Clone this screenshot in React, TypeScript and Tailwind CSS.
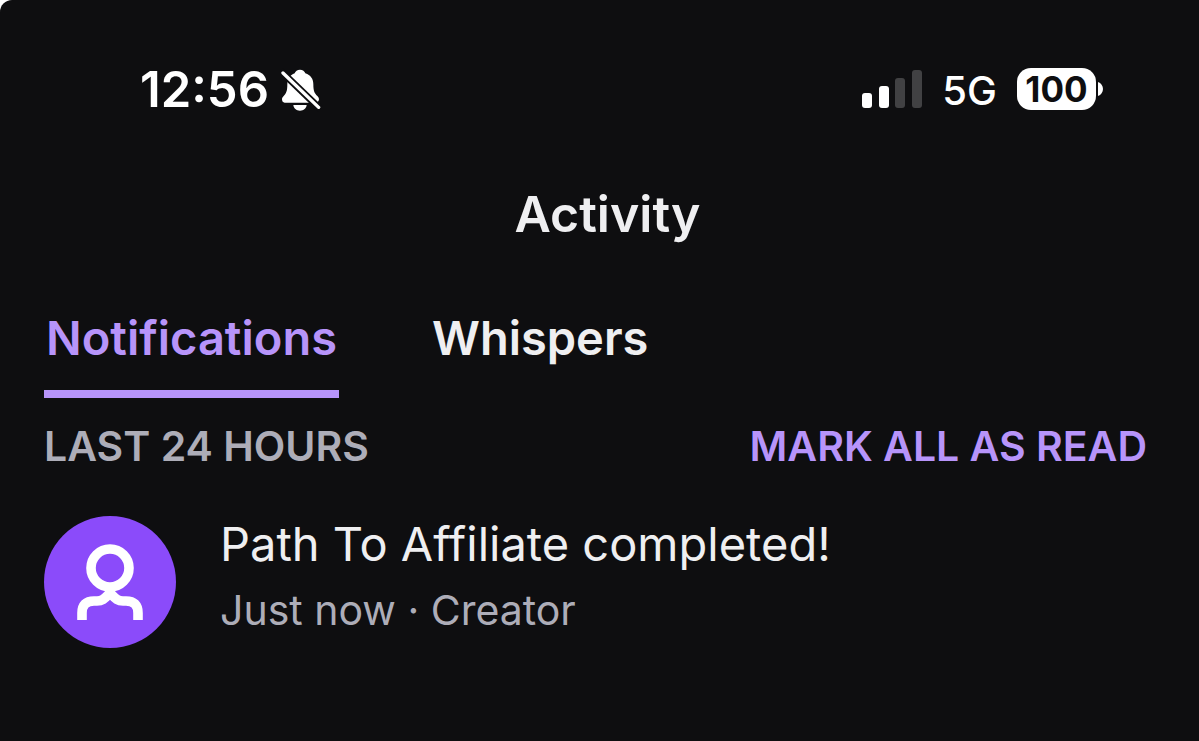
import clsx from "clsx";

const TABS = [
  { href: "#notifications", label: "Notifications", active: true },
  { href: "#whispers", label: "Whispers", active: false },
];

function StatusBar() {
  return (
    <div className="flex h-12 items-center justify-between pr-24 pl-35 text-white">
      <div className="flex items-center gap-3 pt-0.5">
        <span className="text-[49px] leading-12 font-semibold">12:56</span>
        <BellOff />
      </div>
      <div className="flex items-center gap-5">
        <Signal />
        <span className="pt-1 text-[40px] leading-12 font-medium">5G</span>
        <Battery level={100} />
      </div>
    </div>
  );
}

function BellOff() {
  return (
    <svg viewBox="0 0 126 132" className="h-11 w-[42px]" aria-hidden="true">
      <path
        d="M57 5c-8 0-14 5-16 11C27 21 19 33 19 49c0 20-3 27-11 35-4 4-5 7-5 10 0 6 3 10 8 10h92c6 0 11-4 11-10 0-4-2-7-5-10-9-8-12-16-12-35 0-16-8-28-24-33C71 10 65 5 57 5zM37 111c1 10 9 17 20 17s19-7 20-17z"
        fill="currentColor"
      />
      <path d="M-8 2l135 130" stroke="#0e0e10" strokeWidth="21" />
      <path d="M6 15l107 103" stroke="currentColor" strokeWidth="10" strokeLinecap="round" />
    </svg>
  );
}

function Signal() {
  return (
    <svg viewBox="0 0 60 38" className="h-[38px] w-[60px]" aria-hidden="true">
      <rect x="0" y="23" width="10" height="15" rx="3" fill="#fff" />
      <rect x="17" y="16" width="10" height="22" rx="3" fill="#fff" />
      <rect x="33" y="8" width="10" height="30" rx="3" fill="#414143" />
      <rect x="50" y="0" width="10" height="38" rx="3" fill="#414143" />
    </svg>
  );
}

function Battery({ level }: { level: number }) {
  return (
    <div className="flex items-center gap-0.5">
      <span className="flex h-[42px] w-[79px] items-center justify-center rounded-[14px] bg-white text-[35px] font-bold text-[#0e0e10]">
        {level}
      </span>
      <svg viewBox="0 0 5 14" className="h-3.5 w-[5px]" aria-hidden="true">
        <path d="M0 0c3 1 5 4 5 7s-2 6-5 7z" fill="currentColor" />
      </svg>
    </div>
  );
}

function Avatar() {
  return (
    <svg viewBox="0 0 132 132" className="size-33 shrink-0" aria-hidden="true">
      <circle cx="66" cy="66" r="66" fill="#8b4bfa" />
      <g fill="none" stroke="#fff" strokeWidth="9.600">
        <circle cx="66" cy="52" r="19" />
        <path d="M38 104v-7c0-8 4-12 12-12h3c6 0 8-3 13-8l3-3" />
        <path d="M94 104v-7c0-8-4-12-12-12h-3c-6 0-8-3-13-8l-3-3" />
      </g>
    </svg>
  );
}

export default function App() {
  return (
    <div className="bg-white font-['Inter',sans-serif]">
      <main className="min-h-screen rounded-tl-xl bg-[#0e0e10] pt-[65px] text-[#efeff1]">
        <StatusBar />

        <h1 className="mt-[69px] pl-4 text-center text-[50px] leading-16 font-semibold">Activity</h1>

        <nav className="mt-15 flex gap-[91px] px-11">
          {TABS.map(({ href, label, active }) => (
            <a
              key={href}
              href={href}
              className={clsx(
                "border-b-8 px-0.5 pb-5 text-[47px] leading-16 font-semibold",
                active ? "border-[#b794fa] text-[#b794fa]" : "border-transparent",
              )}
            >
              {label}
            </a>
          ))}
        </nav>

        <section>
          <div className="mt-6 flex items-center justify-between pr-13 pl-11 text-[41px] leading-12 font-semibold">
            <h2 className="text-[#adadb8]">LAST 24 HOURS</h2>
            <button className="text-[#b794fa]">MARK ALL AS READ</button>
          </div>

          <article className="mt-[46px] flex gap-11 px-11">
            <Avatar />
            <div>
              <h3 className="text-[47px] leading-14">Path To Affiliate completed!</h3>
              <p className="mt-3 text-[41px] leading-13 text-[#adadb8]">Just now · Creator</p>
            </div>
          </article>
        </section>
      </main>
    </div>
  );
}
